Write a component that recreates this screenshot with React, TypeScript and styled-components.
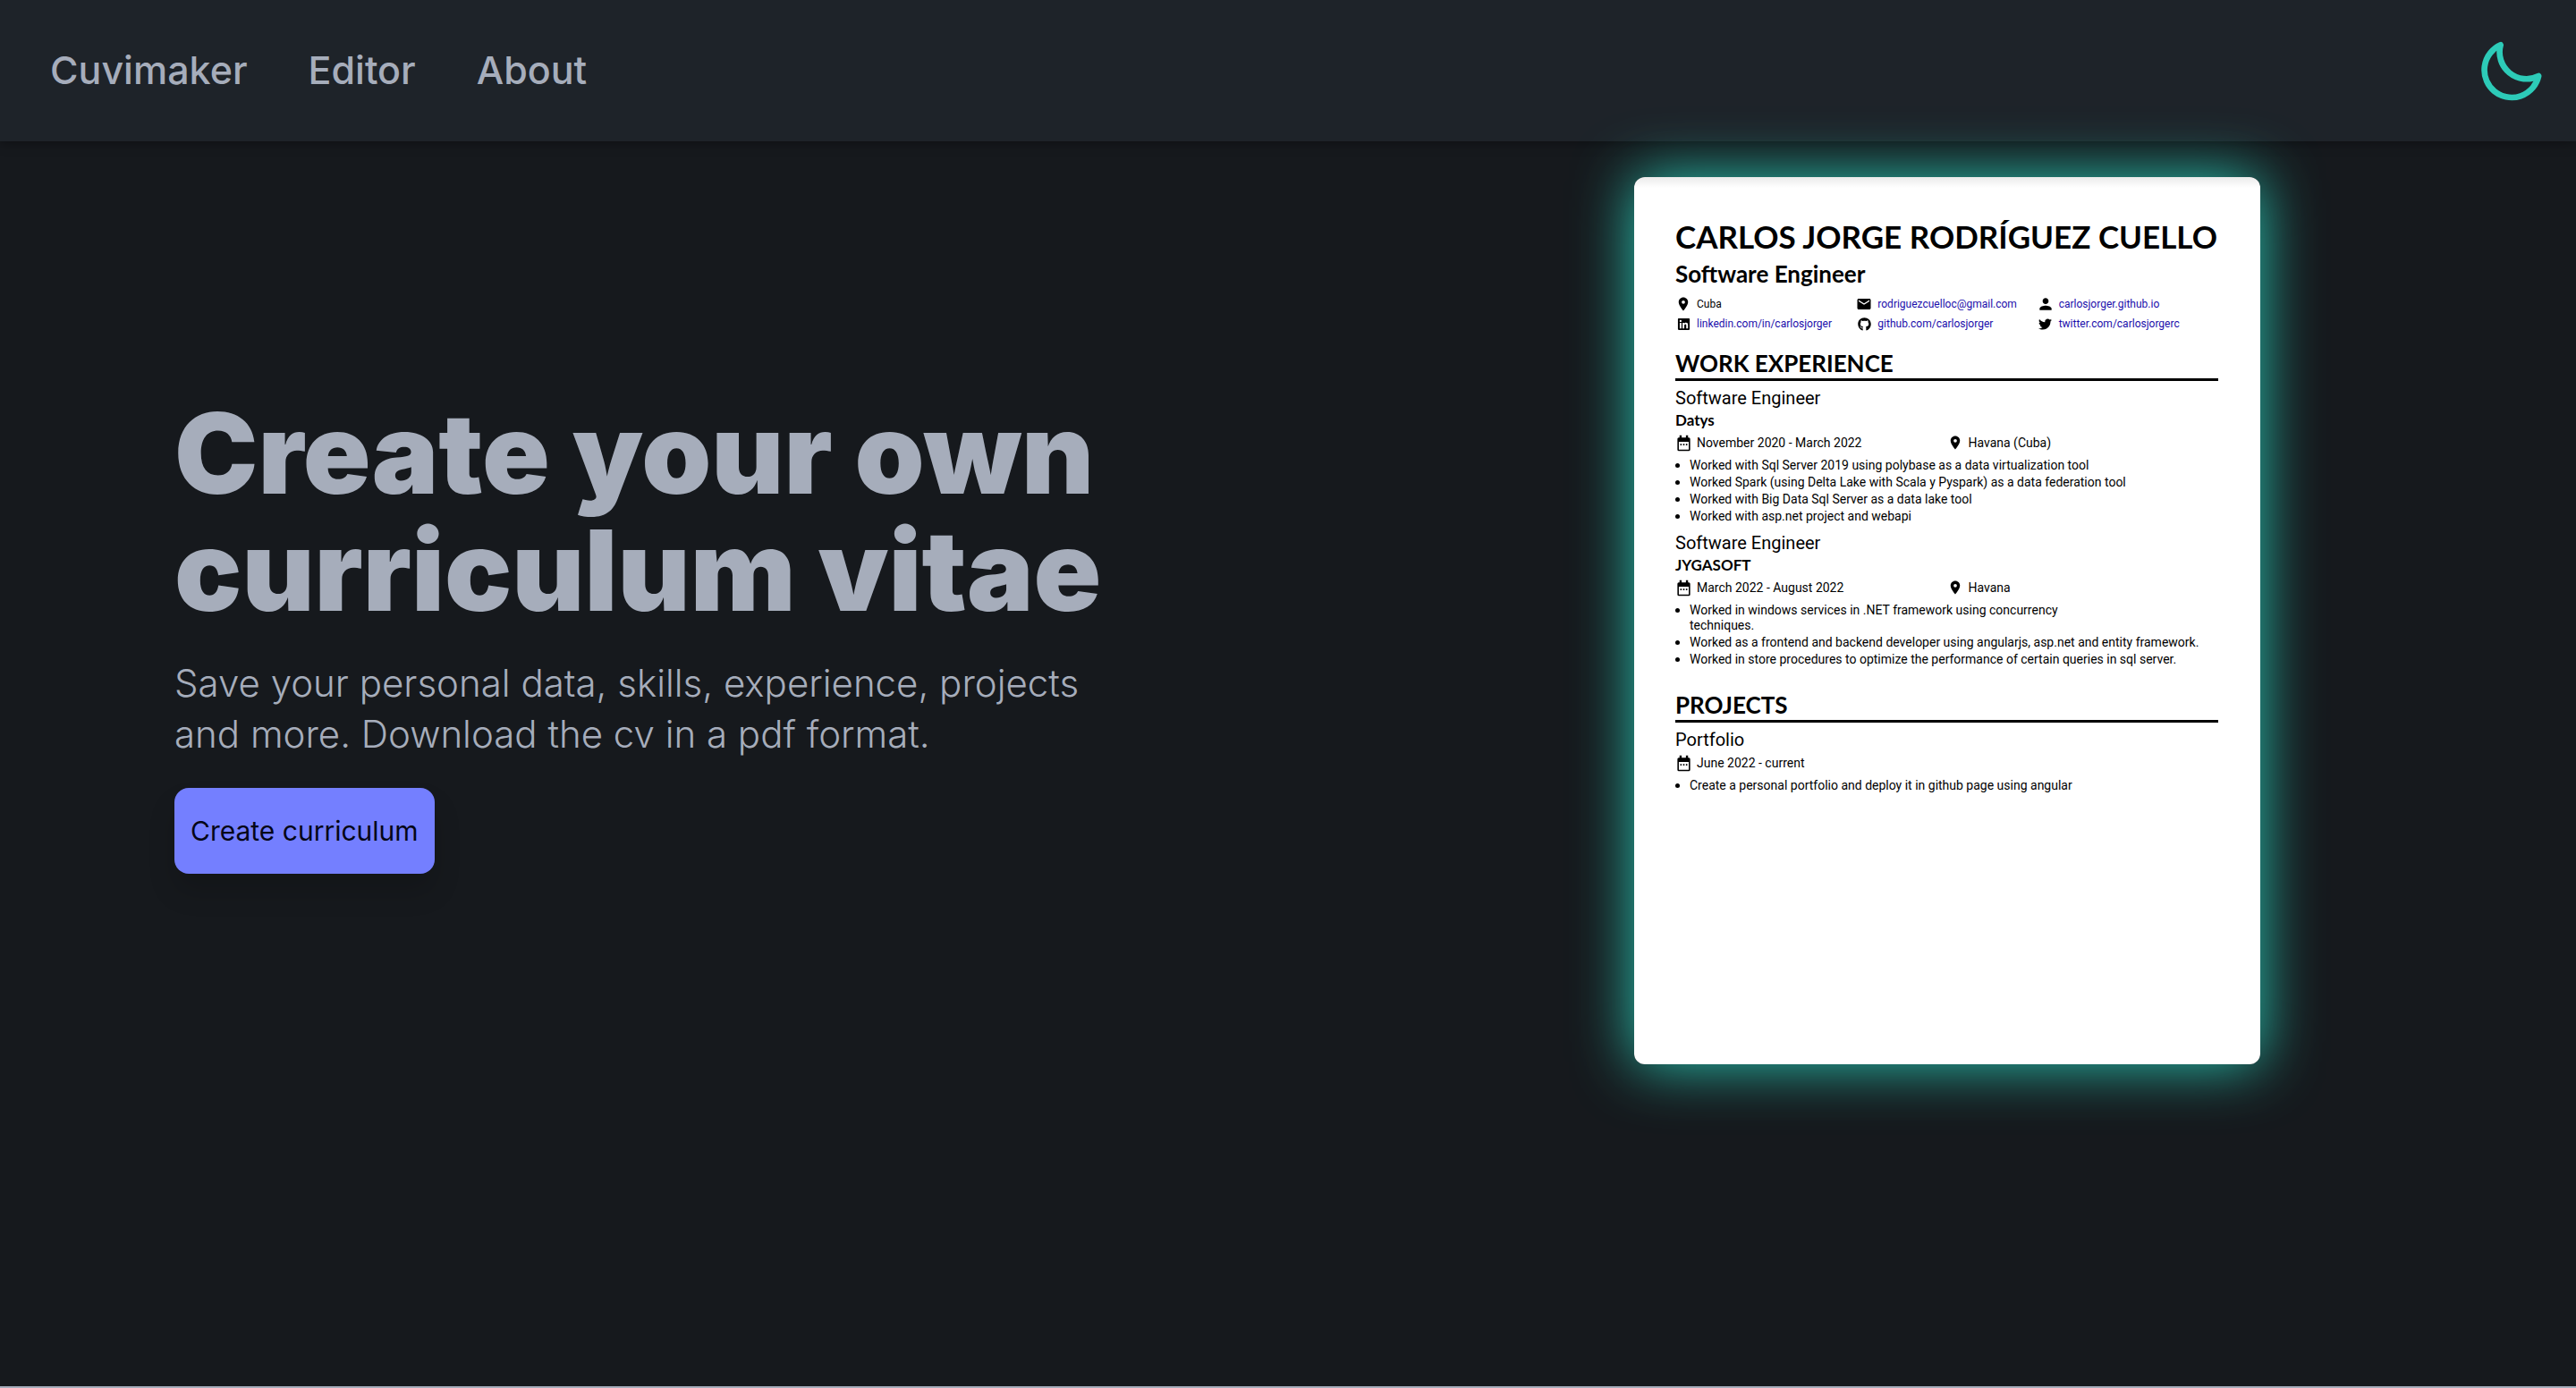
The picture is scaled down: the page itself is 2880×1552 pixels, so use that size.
import React from "react";
import styled, { createGlobalStyle } from "styled-components";
import { MdLocationOn, MdEmail, MdPerson } from "react-icons/md";
import { FaLinkedin, FaGithub, FaTwitter } from "react-icons/fa";

const Global = createGlobalStyle`
  *, *::before, *::after { box-sizing: border-box; }
  body { margin: 0; background: #a6adbb; font-family: Inter, "Open Sans", sans-serif; }
  h1, h2, h3, h4, p, ul { margin: 0; padding: 0; }
  a { text-decoration: none; }
`;

const Page = styled.div`
  display: flex;
  flex-direction: column;
  min-height: calc(100vh - 2px);
  background: #16191d;
  color: #a6adbb;
`;

const Navbar = styled.header`
  display: flex;
  justify-content: space-between;
  align-items: center;
  height: 158px;
  padding: 0 31px 3px 56px;
  background: #1e2329;
  box-shadow: 0 2px 12px rgba(0, 0, 0, 0.35);
`;

const NavLinks = styled.nav`
  display: flex;
  gap: 68px;
`;

const NavLink = styled.a`
  color: #a6adbb;
  font-size: 43px;
  font-weight: 500;
  line-height: 56px;
`;

const ThemeButton = styled.button`
  display: flex;
  padding: 0;
  border: 0;
  background: none;
  color: #2dcbb8;
  cursor: pointer;
`;

const Hero = styled.main`
  display: grid;
  grid-template-columns: 1fr 1fr;
  flex: 1;
  align-items: start;
  padding: 40px 0 0 68px;
`;

const Intro = styled.section`
  max-width: 1280px;
  padding: 243px 80px 0 127px;
`;

const Title = styled.h1`
  font-size: 125px;
  font-weight: 900;
  line-height: 131px;
`;

const Lead = styled.p`
  margin: 32px 0;
  font-size: 42px;
  font-weight: 300;
  line-height: 57px;
`;

const CreateButton = styled.button`
  height: 96px;
  padding: 0 18px;
  border: 0;
  border-radius: 16px;
  background: #747fff;
  box-shadow: 0 20px 30px rgba(0, 0, 0, 0.15);
  color: #050617;
  font-family: inherit;
  font-size: 30px;
  font-weight: 400;
  line-height: 40px;
  cursor: pointer;
`;

const Sheet = styled.article`
  justify-self: center;
  width: 700px;
  min-height: 992px;
  padding: 44px 47px 44px 46px;
  border-radius: 12px;
  background: linear-gradient(#ebebeb, #fff 12px);
  box-shadow: 0 0 66px #2ac8b4;
  color: #000;
  font-family: Roboto, sans-serif;
`;

const Name = styled.h2`
  font: 700 35px/44px Lato, sans-serif;
  white-space: nowrap;
`;

const Role = styled.p`
  margin-top: 4px;
  font: 700 26px/32px Lato, sans-serif;
`;

const Contacts = styled.div`
  display: grid;
  grid-template-columns: repeat(3, 1fr);
  row-gap: 6px;
  margin: 10px 0 20px;
`;

const Meta = styled.div<{ $small?: boolean }>`
  display: flex;
  align-items: center;
  font-size: ${(p) => (p.$small ? 12 : 14)}px;
  line-height: ${(p) => (p.$small ? 16 : 20)}px;
  white-space: nowrap;

  a { color: #1a0dab; }
`;

const IconSlot = styled.span`
  display: flex;
  flex: none;
  justify-content: center;
  align-items: center;
  width: 18px;
  height: 16px;
  margin-right: 6px;

  svg { flex: none; }
`;

const Section = styled.section`
  & + & { margin-top: 26px; }
`;

const SectionTitle = styled.h3`
  padding-bottom: 1px;
  border-bottom: 3px solid #000;
  font: 700 26px/32px Lato, sans-serif;
`;

const Job = styled.div`
  margin-top: 7px;
  & + & { margin-top: 9px; }
`;

const JobTitle = styled.h4`
  font-size: 20px;
  font-weight: 400;
  line-height: 24px;
`;

const Company = styled.p`
  margin-top: 2px;
  font: 700 17px/22px Lato, sans-serif;
`;

const Facts = styled.div`
  display: grid;
  grid-template-columns: 1fr 1fr;
  margin: 4px 0 7px;
`;

const Points = styled.ul`
  display: grid;
  gap: 2px;
  list-style: none;
`;

const Point = styled.li`
  display: flex;
  font-size: 14px;
  line-height: 17px;
  white-space: pre-line;

  &::before {
    content: "";
    flex: none;
    width: 5px;
    height: 5px;
    margin: 6px 11px 0 0;
    border-radius: 50%;
    background: #000;
  }
`;

const CalendarIcon = () => (
  <svg width="19" height="19" viewBox="0 0 24 24" aria-hidden="true">
    <path
      fill="currentColor"
      fillRule="evenodd"
      d="M19 4h-1V1h-3v3H9V1H6v3H5a2 2 0 0 0-2 2v15a2 2 0 0 0 2 2h14a2 2 0 0 0 2-2V6a2 2 0 0 0-2-2zM5 10h14v11H5zM7 13h2v2H7zM11 13h2v2h-2zM15 13h2v2h-2z"
    />
  </svg>
);

const MoonIcon = () => (
  <svg width="80" height="80" viewBox="0 0 24 24" fill="none" stroke="currentColor" strokeWidth="2" strokeLinecap="round" strokeLinejoin="round" aria-hidden="true">
    <path d="M8 3.700A9 9 0 0 0 20.750 14.100 9.200 9.200 0 1 1 8 3.700z" />
  </svg>
);

const contacts = [
  { icon: MdLocationOn, size: 18, text: "Cuba" },
  { icon: MdEmail, size: 18, text: "rodriguezcuelloc@gmail.com", href: "mailto:rodriguezcuelloc@gmail.com" },
  { icon: MdPerson, size: 20, text: "carlosjorger.github.io", href: "https://carlosjorger.github.io" },
  { icon: FaLinkedin, size: 15, text: "linkedin.com/in/carlosjorger", href: "https://linkedin.com/in/carlosjorger" },
  { icon: FaGithub, size: 15, text: "github.com/carlosjorger", href: "https://github.com/carlosjorger" },
  { icon: FaTwitter, size: 15, text: "twitter.com/carlosjorgerc", href: "https://twitter.com/carlosjorgerc" },
];

type Entry = { title: string; company?: string; dates: string; place?: string; points: string[] };

const sections: { title: string; entries: Entry[] }[] = [
  {
    title: "WORK EXPERIENCE",
    entries: [
      {
        title: "Software Engineer",
        company: "Datys",
        dates: "November 2020 - March 2022",
        place: "Havana (Cuba)",
        points: [
          "Worked with Sql Server 2019 using polybase as a data virtualization tool",
          "Worked Spark (using Delta Lake with Scala y Pyspark) as a data federation tool",
          "Worked with Big Data Sql Server as a data lake tool",
          "Worked with asp.net project and webapi",
        ],
      },
      {
        title: "Software Engineer",
        company: "JYGASOFT",
        dates: "March 2022 - August 2022",
        place: "Havana",
        points: [
          "Worked in windows services in .NET framework using concurrency\ntechniques.",
          "Worked as a frontend and backend developer using angularjs, asp.net and entity framework.",
          "Worked in store procedures to optimize the performance of certain queries in sql server.",
        ],
      },
    ],
  },
  {
    title: "PROJECTS",
    entries: [
      {
        title: "Portfolio",
        dates: "June 2022 - current",
        points: ["Create a personal portfolio and deploy it in github page using angular"],
      },
    ],
  },
];

const JobEntry = ({ entry }: { entry: Entry }) => (
  <Job>
    <JobTitle>{entry.title}</JobTitle>
    {entry.company && <Company>{entry.company}</Company>}
    <Facts>
      <Meta><IconSlot><CalendarIcon /></IconSlot>{entry.dates}</Meta>
      {entry.place && <Meta><IconSlot><MdLocationOn size={18} /></IconSlot>{entry.place}</Meta>}
    </Facts>
    <Points>
      {entry.points.map((point) => <Point key={point}>{point}</Point>)}
    </Points>
  </Job>
);

export default function App() {
  return (
    <>
      <Global />
      <Page>
        <Navbar>
          <NavLinks>
            <NavLink href="#home">Cuvimaker</NavLink>
            <NavLink href="#editor">Editor</NavLink>
            <NavLink href="#about">About</NavLink>
          </NavLinks>
          <ThemeButton type="button" aria-label="Toggle theme"><MoonIcon /></ThemeButton>
        </Navbar>
        <Hero>
          <Intro>
            <Title>Create your own curriculum vitae</Title>
            <Lead>Save your personal data, skills, experience, projects and more. Download the cv in a pdf format.</Lead>
            <CreateButton type="button">Create curriculum</CreateButton>
          </Intro>
          <Sheet>
            <Name>CARLOS JORGE RODRÍGUEZ CUELLO</Name>
            <Role>Software Engineer</Role>
            <Contacts>
              {contacts.map(({ icon: Icon, size, text, href }) => (
                <Meta key={text} $small>
                  <IconSlot><Icon size={size} aria-hidden="true" /></IconSlot>
                  {href ? <a href={href}>{text}</a> : text}
                </Meta>
              ))}
            </Contacts>
            {sections.map((section) => (
              <Section key={section.title}>
                <SectionTitle>{section.title}</SectionTitle>
                {section.entries.map((entry) => <JobEntry key={entry.dates} entry={entry} />)}
              </Section>
            ))}
          </Sheet>
        </Hero>
      </Page>
    </>
  );
}
